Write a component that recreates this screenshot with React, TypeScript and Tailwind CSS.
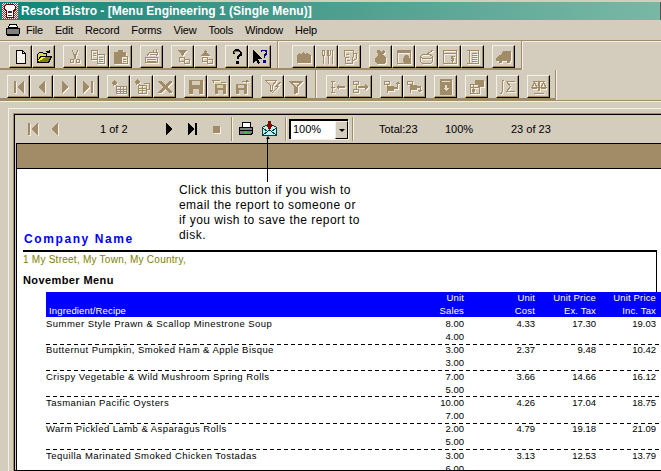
import React from 'react';

// tan icons have a 1px light shadow down and to the right
const Dim: React.FC<{ children: React.ReactNode }> = ({ children }) => (
  <svg width="16" height="16" viewBox="0 0 16 16" shapeRendering="crispEdges">
    <g transform="translate(1 1)" className="text-[#f5f1e7]">{children}</g>
    <g className="text-[#a28c68]">{children}</g>
  </svg>
);

const Solid: React.FC<{ children: React.ReactNode }> = ({ children }) => (
  <svg width="16" height="16" viewBox="0 0 16 16" shapeRendering="crispEdges">{children}</svg>
);

const s = { fill: 'none', stroke: 'currentColor' };
const f = { fill: 'currentColor' };

const icons: Record<string, React.ReactNode> = {
  new: (
    <Solid>
      <path d="M3.5 1.5h6l3 3v10h-9z" fill="#f4f2ea" stroke="#000" />
      <path d="M9.5 1.5v3h3" fill="none" stroke="#000" />
    </Solid>
  ),
  open: (
    <Solid>
      <path d="M1.5 13.5v-8l2-2h3l1 1h3v2" fill="#d8d860" stroke="#000" />
      <path d="M1.5 13.5l3-6h11l-3 6z" fill="#808000" stroke="#000" />
      <path d="M2 12l3-4h5l-5 3z" fill="#ffff00" />
      <path d="M9.5 3.5q2-2.5 4-1M13.5 0.5v2.500h-2.500" fill="none" stroke="#000" />
    </Solid>
  ),
  cut: (
    <Dim>
      <path d="M5 1l4 9M11 1l-4 9" {...s} />
      <path d="M3.500 10.500h3v3h-3zM9.500 10.500h3v3h-3z" {...s} />
    </Dim>
  ),
  copy: (
    <Dim>
      <path d="M1.500 1.500h6v9h-6zM7.500 5.500h7v9h-7z" {...s} />
      <path d="M3 4h3M3 6h3M9 8h4M9 10h4M9 12h4" {...s} />
    </Dim>
  ),
  paste: (
    <Dim>
      <path d="M1 3h4V1h5v2h3v4H8v8H1z" {...f} />
      <path d="M8.500 7.500h6v7h-6zM10 10h3M10 12h3" {...s} />
    </Dim>
  ),
  tray: (
    <Dim>
      <path d="M2.500 7.500l3-4h8l-1 4M1.500 8.500h12v5h-12z" {...s} />
      <path d="M3 10h9M3 12h9M6 5h6M9 1l1 2M12 0l1 3" {...s} />
    </Dim>
  ),
  winDown: (
    <Dim>
      <path d="M3 1h9L7.500 7z" {...f} />
      <path d="M4.500 8.500h5v4h-5zM9.500 10.500h5v4h-5z" {...s} />
    </Dim>
  ),
  winUp: (
    <Dim>
      <path d="M3 7h9L7.500 1z" {...f} />
      <path d="M4.500 8.500h5v4h-5zM9.500 10.500h5v4h-5z" {...s} />
    </Dim>
  ),
  help: (
    <Solid>
      <path d="M4.500 5V3l2-2h3l2 2v3l-3 2v2" fill="none" stroke="#000" strokeWidth="2" />
      <path d="M5.500 4V3l1-1h3" fill="none" stroke="#808000" />
      <path d="M7 12h3v3H7z" fill="#000" />
    </Solid>
  ),
  whatsThis: (
    <Solid>
      <path d="M1 1v13l3-3 2 4 2-1-2-4h4z" fill="#000" />
      <path d="M9.500 3V1.500h4l1 1v2l-2 2v2" fill="none" stroke="#000080" strokeWidth="1.500" />
      <path d="M11 11h2.500v2.500H11z" fill="#000080" />
    </Solid>
  ),
  loaf: (
    <Dim>
      <path d="M1 14V6l2-2 2 1 2-2 2 2 2-1 2 1 2 2v7z" {...f} />
    </Dim>
  ),
  cutlery: (
    <Dim>
      <path d="M3.500 1.500h2v5h-2zM4.500 7v8M8 1v5l1.500 1L11 6V1M9.500 1v14M13.500 1v14" {...s} />
    </Dim>
  ),
  jug: (
    <Dim>
      <path d="M2.500 1.500h9l-1 13h-7zM11.500 4.500h3v5l-3 2" {...s} />
      <path d="M4 5h3M4 8h3M5 11h3" {...s} />
    </Dim>
  ),
  bag: (
    <Dim>
      <path d="M4 1h2l2 2 3-2 1 2-2 2 3 4v4l-2 2H4l-2-2V9l3-3z" {...f} />
    </Dim>
  ),
  winBag: (
    <Dim>
      <path d="M1.500 1.500h13v13h-13z" {...s} />
      <path d="M1 1h14v3H1zM9 6h3l2 4v3l-2 2H9l-2-2v-3z" {...f} />
    </Dim>
  ),
  pot: (
    <Dim>
      <path d="M1.500 7.500c2-3 10-3 12 0v5l-2 2h-8l-2-2zM1.500 8.500q6 3 12 0M8 5l6-4" {...s} />
    </Dim>
  ),
  winDollar: (
    <Dim>
      <path d="M1.500 1.500h13v13h-13zM2 4h12M10.500 6.500v7M12.500 7.500h-3v2h2v2h-3" {...s} />
    </Dim>
  ),
  book: (
    <Dim>
      <path d="M4.500 1.500h9v13h-9zM2 1.500h2.500M2 14.500h2.500M7 4h5M7 6h5M7 8h5M7 10h5M7 12h5" {...s} />
    </Dim>
  ),
  truck: (
    <Dim>
      <path d="M0 9l3-3h2l2-4h8v10H0z" {...f} />
      <path d="M3 12h3v2H3zM11 12h3v2h-3z" {...f} />
    </Dim>
  ),
  first: (
    <Dim>
      <path d="M3 2h2v12H3zM13 2v12L6 8z" {...f} />
    </Dim>
  ),
  prev: (
    <Dim>
      <path d="M11 2v12L4 8z" {...f} />
    </Dim>
  ),
  next: (
    <Dim>
      <path d="M5 2v12l7-6z" {...f} />
    </Dim>
  ),
  last: (
    <Dim>
      <path d="M3 2v12l7-6zM11 2h2v12h-2z" {...f} />
    </Dim>
  ),
  grid1: (
    <Dim>
      <path d="M5.500 7.500h10v7h-10zM5.500 10h10M5.500 12h10M9 7.500v7M12 7.500v7" {...s} />
      <path d="M3 1l1 1 1-1v2l2 1-2 1 1 2-2-1-2 1V5L0 4l2-1z" {...f} />
    </Dim>
  ),
  grid2: (
    <Dim>
      <path d="M4.500 6.500h8v8h-8zM4.500 9h8M4.500 11.500h8M8 6.500v8M9.500 4.500h6v6h-3" {...s} />
      <path d="M3 0l1 1 1-1v2l2 1-2 1 1 2-2-1-2 1V4L0 3l2-1z" {...f} />
    </Dim>
  ),
  del: (
    <Dim>
      <path d="M1 2h3l4 4 4-4h3v1l-5 5 5 5v1h-3L8 10l-4 4H1v-1l5-5-5-5z" {...f} />
    </Dim>
  ),
  save: (
    <Dim>
      <path d="M1 1h14v14H1z" {...f} />
      <path d="M4 2h8v4H4zM5 10h6v5H5z" fill="#d4ccbc" />
    </Dim>
  ),
  saveAll: (
    <Dim>
      <path d="M4 5h11v10H4z" {...f} />
      <path d="M6 6h6v3H6zM7 11h5v4H7z" fill="#d4ccbc" />
      <path d="M1.500 1.500h7M1.500 1.500l2 3M9.500 3.500h5" {...s} />
    </Dim>
  ),
  saveAs: (
    <Dim>
      <path d="M2 5h11v10H2z" {...f} />
      <path d="M4 6h6v3H4zM5 11h5v4H5z" fill="#d4ccbc" />
      <path d="M8 2.500h6M12 1l2 1.500L12 4" {...s} />
    </Dim>
  ),
  filterBolt: (
    <Dim>
      <path d="M0.500 1.500h11l-4 5v5l-2 1v-6z" {...s} />
      <path d="M14 3l-5 5 3 0-5 6 8-7h-3l4-4z" {...f} />
    </Dim>
  ),
  filter: (
    <Dim>
      <path d="M1 2h14l-5 6v6l-4 1V8zM4 3.500l3.500 4h1l3.500-4z" {...f} fillRule="evenodd" />
    </Dim>
  ),
  flowLeft: (
    <Dim>
      <path d="M0.500 2.500h4M0.500 8h4M0.500 13.500h4M2.500 2.500v11" {...s} />
      <path d="M6 8l3-3v2h6v2H9v2z" {...f} />
    </Dim>
  ),
  flowRight: (
    <Dim>
      <path d="M0.500 2.500h5v3h-5zM0.500 10.500h5v3h-5zM3 5.500v5" {...s} />
      <path d="M5 7h7V5l3 3-3 3V9H5z" {...f} />
    </Dim>
  ),
  flowUp: (
    <Dim>
      <path d="M0.500 2.500h5v3h-5zM3 5.500v8" {...s} />
      <path d="M3 7h7v5H3zM10 8h3V5h-2l3-3 2 3h-2v5h-4z" {...f} />
    </Dim>
  ),
  flowDown: (
    <Dim>
      <path d="M0.500 2.500h5v3h-5zM3 5.500v8" {...s} />
      <path d="M3 6h7v5H3zM10 7h3.500v4H15l-2 3-2-3h1.500V9H10z" {...f} />
    </Dim>
  ),
  downBox: (
    <Dim>
      <path d="M2 0h12v16H2z" {...f} />
      <path d="M4 2h8v1H4zM7 6h2v3h2l-3 3-3-3h2z" fill="#e4dccb" />
    </Dim>
  ),
  forms: (
    <Dim>
      <path d="M1.500 5.500h9v9h-9zM1.500 8h9M4 5.500v9" {...s} />
      <path d="M6 1h9v7H9V5H6zM3 10h3v3H3z" {...f} />
    </Dim>
  ),
  sigma: (
    <Dim>
      <path d="M4 1q-2 0-2 2v10q0 2-2 2M6.500 2.500h8M6.500 2.500l4 5-4 5h8" {...s} />
    </Dim>
  ),
  scales: (
    <Dim>
      <path d="M2 2h12v1H2zM7 2h2v10H7zM3 14h10v1H3z" {...f} />
      <path d="M3.500 3.500l-2.500 5h5zM12.500 3.500l-2.500 5h5z" {...s} />
      <path d="M1 9h5v1H1zM10 9h5v1h-5z" {...f} />
    </Dim>
  ),
};

const ToolButton: React.FC<{ name: string }> = ({ name }) => (
  <div className="flex h-[23px] w-[23px] items-center justify-center border-t border-l border-t-[#f4f0e6] border-l-[#f4f0e6] border-r border-b border-r-black border-b-black shadow-[inset_-1px_-1px_0_#a28c68]">
    {icons[name]}
  </div>
);

const Toolbar: React.FC<{ groups: string[][]; className: string }> = ({ groups, className }) => (
  <div className={`flex gap-[8px] border-r border-b-2 border-r-[#a28c68] border-b-[#a28c68] shadow-[1px_0_0_#f4f0e6] ${className}`}>
    {groups.map((g) => (
      <div key={g[0]} className="flex">
        {g.map((n) => (
          <ToolButton key={n} name={n} />
        ))}
      </div>
    ))}
  </div>
);

const menuItems = ['File', 'Edit', 'Record', 'Forms', 'View', 'Tools', 'Window', 'Help'];

const dash = 'bg-[repeating-linear-gradient(90deg,#000_0_4px,transparent_4px_7px)] bg-[length:100%_1px] bg-no-repeat';

const rows = [
  { name: 'Summer Style Prawn & Scallop Minestrone Soup', sales: '8.00', sales2: '4.00', cost: '4.33', ex: '17.30', inc: '19.03', h: 'h-[27px]' },
  { name: 'Butternut Pumpkin, Smoked Ham & Apple Bisque', sales: '3.00', sales2: '3.00', cost: '2.37', ex: '9.48', inc: '10.42', h: `h-[26px] ${dash} [&>span]:-mt-px` },
  { name: 'Crispy Vegetable & Wild Mushroom Spring Rolls', sales: '7.00', sales2: '5.00', cost: '3.66', ex: '14.66', inc: '16.12', h: `h-[26px] ${dash}` },
  { name: 'Tasmanian Pacific Oysters', sales: '10.00', sales2: '7.00', cost: '4.26', ex: '17.04', inc: '18.75', h: `h-[27px] ${dash}` },
  { name: 'Warm Pickled Lamb & Asparagus Rolls', sales: '2.00', sales2: '5.00', cost: '4.79', ex: '19.18', inc: '21.09', h: `h-[26px] ${dash} [&>span]:-mt-px` },
  { name: 'Tequilla Marinated Smoked Chicken Tostadas', sales: '3.00', sales2: '6.00', cost: '3.13', ex: '12.53', inc: '13.79', h: `h-[26px] ${dash}` },
];

const cols = 'grid grid-cols-[354px_64px_71px_61px_60px] pr-[5px]';

const Sep = ({ className }: { className: string }) => (
  <div className={`h-[24px] w-[1px] bg-[#a28c68] shadow-[1px_0_0_#f4f0e6] ${className}`} />
);

export default function App() {
  return (
    <div className="relative flex h-[471px] w-[661px] flex-col overflow-hidden bg-[#d4ccbc] font-['Liberation_Sans',Arial,sans-serif] text-[11px] text-black">
      {/* title bar */}
      <div className="mt-[2px] flex h-[18px] shrink-0 items-center gap-[3px] border-r border-r-[#555] bg-gradient-to-r from-[#07857a] to-[#78b8a5] pl-[2px] text-[12px] font-bold text-white">
        <svg width="16" height="16" viewBox="0 0 16 16" shapeRendering="crispEdges">
          <defs>
            <pattern id="dither" width="2" height="2" patternUnits="userSpaceOnUse">
              <rect width="2" height="2" fill="#fff" />
              <rect width="1" height="1" fill="#d02020" />
              <rect x="1" y="1" width="1" height="1" fill="#d02020" />
            </pattern>
          </defs>
          <rect width="16" height="16" fill="url(#dither)" />
          <path d="M4.500 1.500h7l2 2v3l-2 1v7h-7v-7l-2-1v-3z" fill="#fff" stroke="#600" />
          <path d="M6 8h4v2H6zM6 12h4v1H6z" fill="#333" />
        </svg>
        <span>Resort Bistro - [Menu Engineering 1 (Single Menu)]</span>
      </div>

      {/* menu bar */}
      <div className="flex h-[20px] shrink-0 items-center pl-[5px]">
        <Solid>
          <path d="M4.500 2.500h7l1 3h-9z" fill="#fff" stroke="#000" />
          <path d="M1.500 6.500h13v5l-1 1h-12z" fill="#808080" stroke="#000" />
          <path d="M2 12.500h12v1H2z" fill="#000" />
        </Solid>
        <div className="ml-[5px] flex gap-[12px] tracking-[-0.2px]">
          {menuItems.map((m) => (
            <span key={m}>{m}</span>
          ))}
        </div>
      </div>

      {/* main toolbars */}
      <div className="shrink-0 border-t border-t-[#a28c68] shadow-[inset_0_1px_0_#f4f0e6]">
        <div className="flex">
          <Toolbar
            className="h-[29px] w-[278px] pl-[9px] pt-[4px]"
            groups={[['new', 'open'], ['cut', 'copy', 'paste'], ['tray'], ['winDown', 'winUp'], ['help', 'whatsThis']]}
          />
          <Toolbar
            className="h-[29px] w-[244px] pl-[14px] pt-[4px]"
            groups={[['loaf', 'cutlery', 'jug'], ['bag', 'winBag', 'pot', 'winDollar', 'book'], ['truck']]}
          />
        </div>
        <div className="flex">
          <Toolbar
            className="h-[30px] w-[316px] pl-[7px] pt-[5px]"
            groups={[['first', 'prev', 'next', 'last'], ['grid1', 'grid2', 'del'], ['save', 'saveAll', 'saveAs'], ['filterBolt', 'filter']]}
          />
          <Toolbar
            className="h-[30px] w-[240px] pl-[10px] pt-[5px]"
            groups={[['flowLeft', 'flowRight'], ['flowUp', 'flowDown'], ['downBox'], ['forms'], ['sigma'], ['scales']]}
          />
        </div>
      </div>

      {/* report viewer */}
      <div className="h-[1px] shrink-0 bg-[#a28c68] shadow-[0_1px_0_#f4f0e6]" />
      <div className="ml-[8px] mt-[7px] flex min-h-0 flex-1 flex-col border-t border-l border-t-[#f4f0e6] border-l-[#f4f0e6] pl-[4px] pt-[4px]">
        <div className="flex min-h-0 flex-1 flex-col border-t border-l border-t-[#a28c68] border-l-[#a28c68]">
          <div className="flex min-h-0 flex-1 flex-col border-t border-l border-b border-black">
            {/* viewer toolbar */}
            <div className="flex h-[28px] shrink-0 items-center pl-[10px]">
              <div className="w-[16px]">{icons.first}</div>
              <div className="ml-[6px] w-[16px]">{icons.prev}</div>
              <span className="ml-[37px] w-[28px] whitespace-nowrap">1 of 2</span>
              <div className="ml-[34px] w-[16px]">
                <Solid><path d="M4 2v12l7-6z" fill="#000" /></Solid>
              </div>
              <div className="ml-[6px] w-[16px]">
                <Solid><path d="M4 2v12l7-6zM11 2h2v12h-2z" fill="#000" /></Solid>
              </div>
              <div className="ml-[13px] h-[7px] w-[7px] bg-[#a28c68] shadow-[1px_1px_0_#f4f0e6]" />
              <Sep className="ml-[11px]" />
              <div className="ml-[6px] w-[16px]">
                <Solid>
                  <path d="M4.500 1.500h8v5h-8z" fill="#fff" stroke="#000" />
                  <path d="M1.500 6.500h13v5l-1 2h-12z" fill="#808080" stroke="#000" />
                  <path d="M2 9h12v1H2z" fill="#000" />
                  <path d="M7 11h2v1H7z" fill="#00ff00" />
                </Solid>
              </div>
              <div className="ml-[8px] w-[16px]">
                <Solid>
                  <path d="M0.500 6.500l7-4 7 4v8h-14z" fill="#bdf0f0" stroke="#004040" />
                  <path d="M1 14l6.500-5 6.500 5M1 7l5 4M14 7l-5 4" fill="none" stroke="#004040" />
                  <path d="M6 0h3v4h2l-3.500 5L4 4h2z" fill="#900000" />
                </Solid>
              </div>
              <Sep className="ml-[7px]" />
              <div className="ml-[3px] flex h-[20px] w-[59px] border-t-2 border-l-2 border-t-black border-l-black bg-white shadow-[1px_1px_0_#f4f0e6]">
                <span className="flex-1 pl-[2px] leading-[17px]">100%</span>
                <div className="flex w-[13px] items-center justify-center border-t border-l border-r border-b border-t-[#f4f0e6] border-l-[#f4f0e6] border-r-black border-b-black bg-[#d4ccbc]">
                  <div className="h-0 w-0 border-x-[3px] border-t-[3px] border-x-transparent border-t-black" />
                </div>
              </div>
              <Sep className="ml-[4px]" />
              <span className="ml-[26px] w-[66px]">Total:23</span>
              <span className="w-[66px]">100%</span>
              <span>23 of 23</span>
            </div>

            {/* page */}
            <div className="ml-[1px] flex min-h-0 flex-1 flex-col overflow-hidden border-t border-l border-black bg-white">
              <div className="h-[25px] shrink-0 border-b border-black bg-[#a28c68]" />
              <div className="ml-[6px] flex h-[83px] w-[634px] shrink-0 items-end border-b-2 border-black pb-[2px] pl-[1px]">
                <span className="text-[12px] font-bold tracking-[1.6px] text-[#0000ff]">Company Name</span>
              </div>
              <div className="ml-[6px] h-[40px] w-[634px] shrink-0 border-r border-black">
                <div className="mt-[1px] h-[13px] text-[10px] leading-[13px] tracking-[0.25px] text-[#808000]">1 My Street, My Town, My Country,</div>
                <div className="mt-[6px] text-[11px] font-bold tracking-[0.4px]">November Menu</div>
              </div>
              <div className="ml-[29px] text-[9.5px]">
                <div className={`${cols} h-[25px] bg-[#0000ff] leading-[13px] tracking-[0.15px] text-white [&>span]:-mt-px`}>
                  <span className="self-end pl-[3px]">Ingredient/Recipe</span>
                  <span className="text-right">Unit<br />Sales</span>
                  <span className="text-right">Unit<br />Cost</span>
                  <span className="text-right">Unit Price<br />Ex. Tax</span>
                  <span className="text-right">Unit Price<br />Inc. Tax</span>
                </div>
                {rows.map((r) => (
                  <div key={r.name} className={`${cols} ${r.h} leading-[13px]`}>
                    <span className="whitespace-nowrap tracking-[0.45px]">{r.name}</span>
                    <span className="text-right">{r.sales}<br />{r.sales2}</span>
                    <span className="text-right">{r.cost}</span>
                    <span className="text-right">{r.ex}</span>
                    <span className="text-right">{r.inc}</span>
                  </div>
                ))}
              </div>
            </div>
          </div>
        </div>
      </div>

      {/* callout over the report */}
      <div className="absolute left-[266px] top-[136px] flex h-[46px] w-[3px] flex-col items-center">
        <div className="h-0 w-0 border-x-[2px] border-b-[3px] border-x-transparent border-b-black" />
        <div className="w-px flex-1 bg-black" />
      </div>
      <div className="absolute left-[179px] top-[183px] w-[185px] text-[12px] leading-[15px] tracking-[0.45px]">
        Click this button if you wish to email the report to someone or if you wish to save the report to disk.
      </div>
    </div>
  );
}
